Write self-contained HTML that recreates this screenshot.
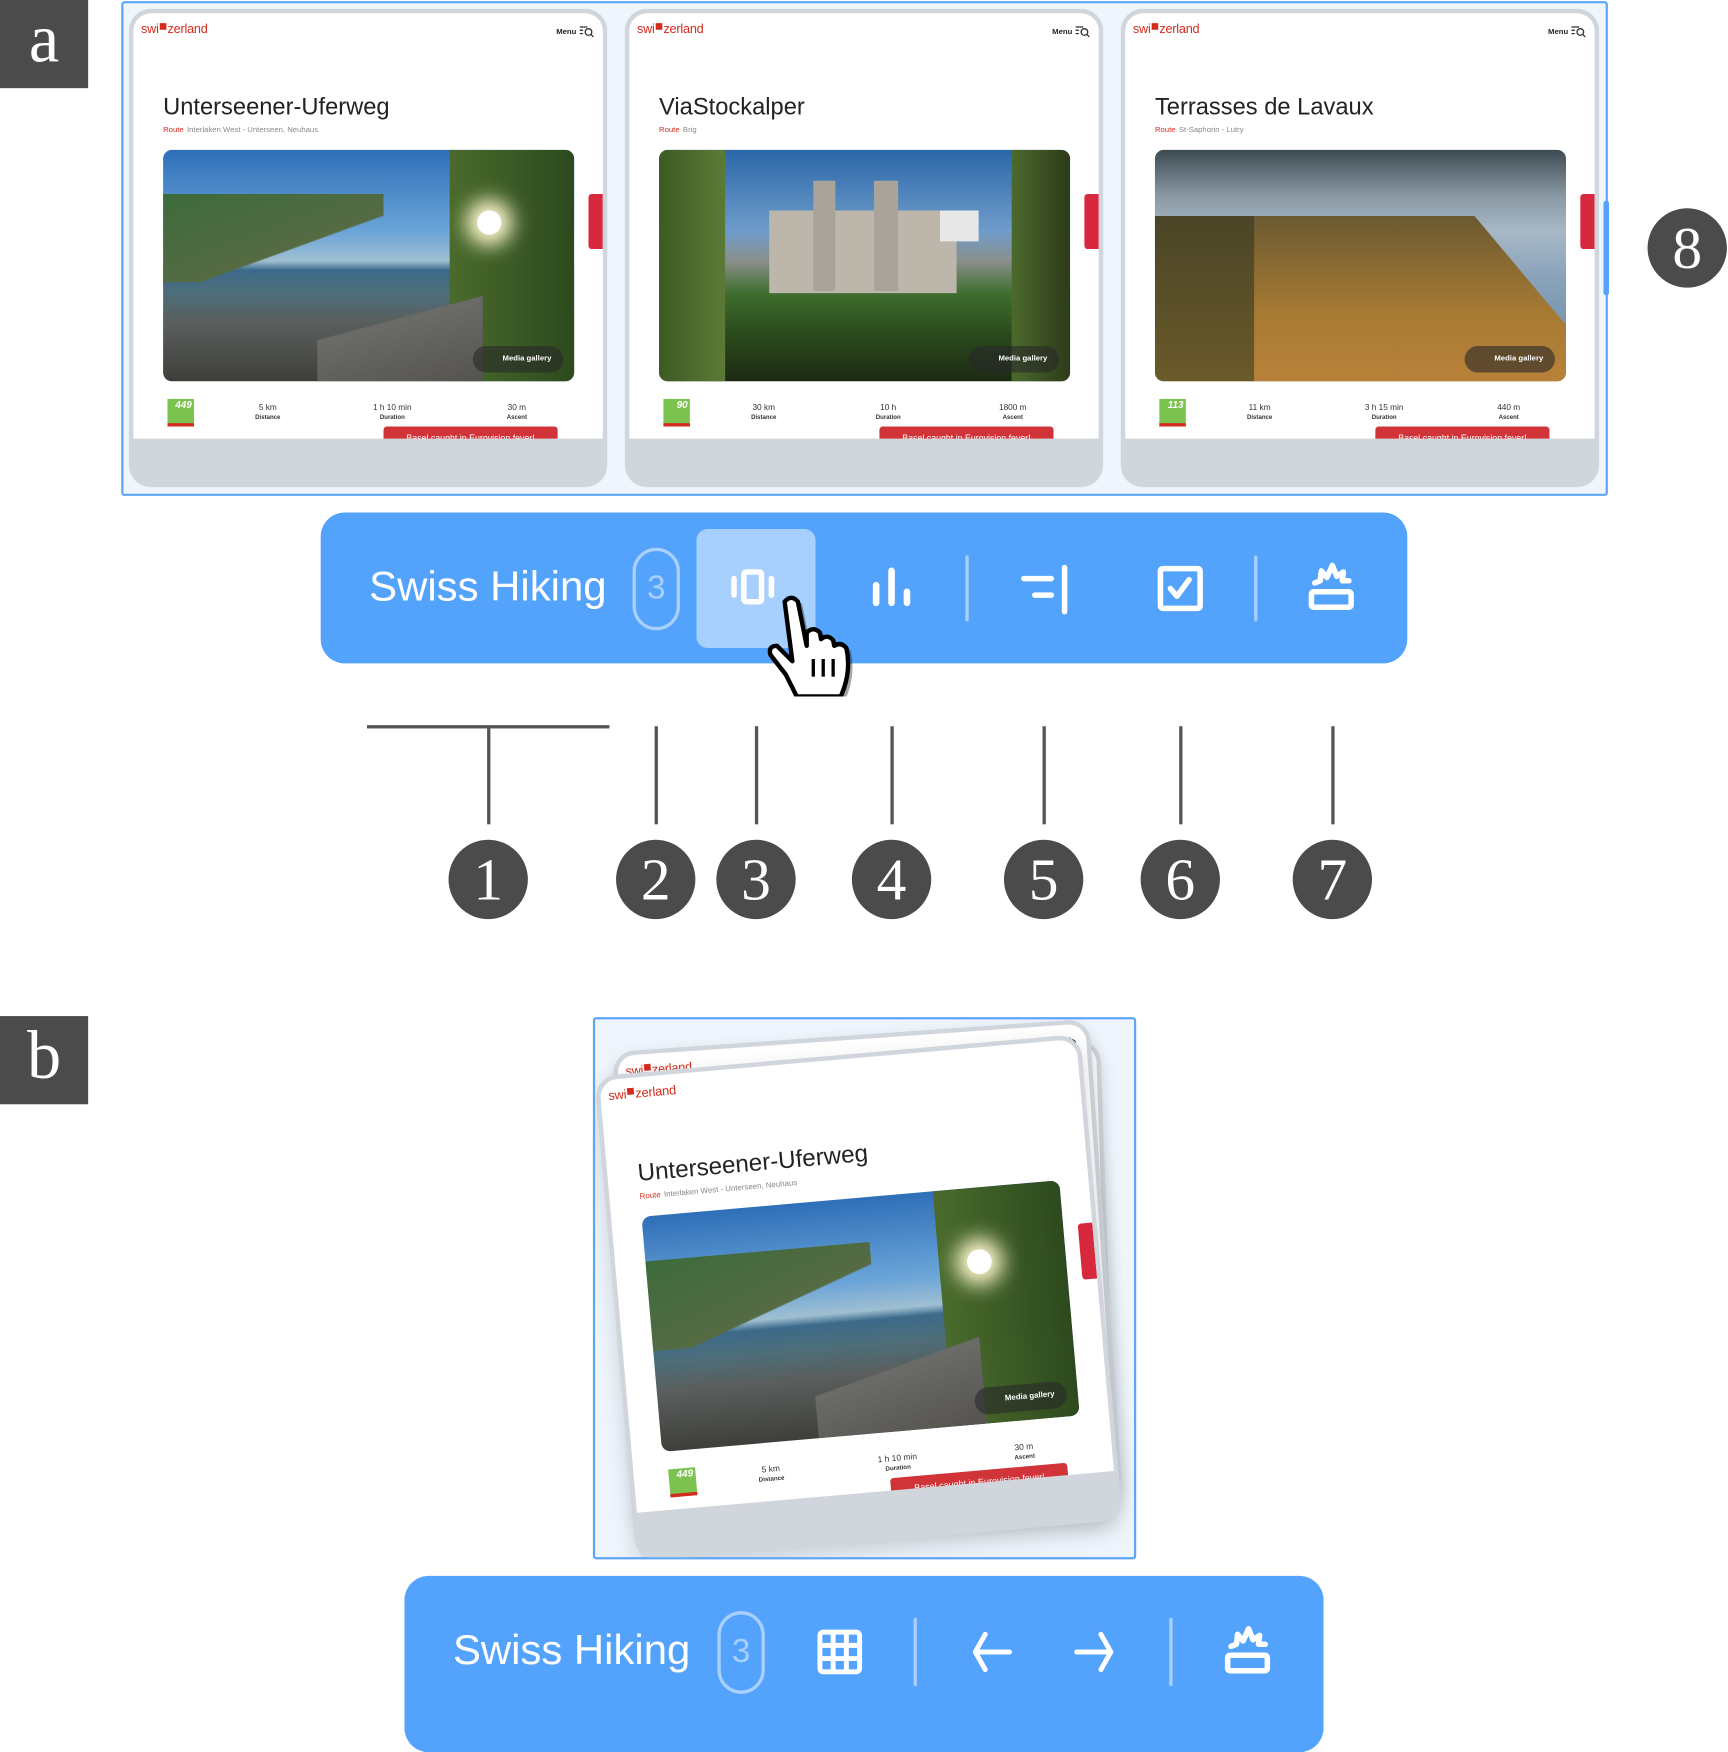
<!DOCTYPE html>
<html><head><meta charset="utf-8"><style>
*{margin:0;padding:0;box-sizing:border-box}
html,body{width:1728px;height:1728px;overflow:hidden;background:#fff;font-family:"Liberation Sans",sans-serif}
#w{position:absolute;left:0;top:0;width:1568px;height:1568px;transform:scale(1.10204);transform-origin:0 0}
.abs{position:absolute}
.lab{position:absolute;width:80px;height:80px;background:#4b4b4b;color:#fff;font-family:"Liberation Serif",serif;font-size:62px;line-height:72px;text-align:center}
.num{position:absolute;width:72px;height:72px;border-radius:50%;background:#4b4b4b;color:#fff;font-family:"Liberation Serif",serif;font-size:54px;line-height:72px;text-align:center}
.vl{position:absolute;width:3px;background:#555;top:659px;height:89px}
.box{position:absolute;border:2px solid #5ea5f6;background:#eef5fd;border-radius:3px}
.card{position:absolute;width:434px;height:434px;background:#d1d5dc;border-radius:20px;overflow:hidden}
.wh{position:absolute;left:4px;top:4px;width:426px;height:386px;background:#fff;border-radius:16px 16px 0 0;overflow:hidden}
.logo{position:absolute;left:7px;top:9px;color:#d52b1e;font-size:11.5px;letter-spacing:-0.2px}
.logo i{display:inline-block;width:6px;height:6px;background:#d52b1e;vertical-align:3px;margin:0 1px}
.menu{position:absolute;right:8px;top:11px;font-size:7px;font-weight:bold;color:#222}
.menu svg{vertical-align:-3px;margin-left:3px}
.tit{position:absolute;left:27px;top:73px;font-size:21.5px;color:#222;white-space:nowrap}
.rt{position:absolute;left:27px;top:103px;font-size:7px;color:#888;white-space:nowrap}
.rt span{color:#d52b1e;margin-right:3px}
.ph{position:absolute;left:27px;top:124px;width:373px;height:210px;border-radius:8px;overflow:hidden}
.mg{position:absolute;right:10px;bottom:8px;width:82px;height:24px;border-radius:12px;background:rgba(40,40,40,.6);color:#fff;font-size:7px;font-weight:bold;line-height:24px;padding-left:27px}
.as{position:absolute;left:413px;top:164px;width:13px;height:50px;background:#d8283d;border-radius:3px 0 0 3px}
.bd{position:absolute;left:31px;top:350px;width:24px;height:25px;background:#7cc24e;color:#fff;font-size:9px;font-weight:bold;font-style:italic;text-align:right;padding-right:2px;border-bottom:3px solid #d52b1e}
.st{position:absolute;top:353px;width:80px;text-align:center;font-size:7.5px;color:#333}
.st small{display:block;font-size:5.5px;font-weight:bold;margin-top:2px}
.rb{position:absolute;left:227px;top:375px;width:158px;height:16px;background:#d13438;border-radius:3px 3px 0 0;color:#fff;font-size:8px;text-align:center;line-height:22px;overflow:hidden}
.tb{position:absolute;background:#53a3fd;border-radius:22px}
.tt{position:absolute;color:#fff;font-size:38px;white-space:nowrap}
.pill{position:absolute;width:43px;height:75px;border:3px solid #a9cffd;border-radius:22px;color:#a9cffd;font-size:30px;text-align:center;line-height:68px}
.sep{position:absolute;width:3px;background:#a9cffd;border-radius:2px}
</style></head><body><div id="w">

<div class="lab" style="left:0;top:0">a</div>
<div class="lab" style="left:0;top:922px">b</div>

<div class="box" style="left:110px;top:1px;width:1349px;height:449px"></div>
<div class="abs" style="left:1455px;top:182px;width:5px;height:86px;background:#53a3fd;border-radius:3px"></div>
<div class="num" style="left:1495px;top:189px">8</div>

<!-- card 1 -->
<div class="card" style="left:117px;top:8px"><div class="wh">
<div class="logo">swi<i></i>zerland</div><div class="menu">Menu<svg width="13" height="11" viewBox="0 0 13 11" fill="none" stroke="#333" stroke-width="1.2"><path d="M0 1.5h7M0 4.5h3M0 7.5h3"/><circle cx="8" cy="6" r="3"/><path d="M10 8l2.5 2.5"/></svg></div>
<div class="tit">Unterseener-Uferweg</div>
<div class="rt"><span>Route</span>Interlaken West - Unterseen, Neuhaus</div>
<div class="ph" style="background:linear-gradient(180deg,#2f6fb8 0%,#6aa4d8 35%,#9fbfd2 48%,#3c6a8a 52%,#4d6e7a 62%,#5a5e5c 75%,#3e3f3a 100%)">
<div class="abs" style="left:0;top:40px;width:200px;height:80px;background:linear-gradient(160deg,#3d6b3a,#556b43 60%,transparent 61%)"></div>
<div class="abs" style="left:260px;top:0;width:113px;height:210px;background:linear-gradient(90deg,#4a6b2c,#2d4a1e)"></div>
<div class="abs" style="left:285px;top:55px;width:22px;height:22px;border-radius:50%;background:#fff;box-shadow:0 0 18px 10px #fff8d0"></div>
<div class="abs" style="left:140px;top:120px;width:150px;height:90px;background:linear-gradient(165deg,transparent 40%,#6b6b68 41%,#55534e)"></div>
<div class="mg">Media gallery</div></div>
<div class="as"></div><div class="bd">449</div>
<div class="st" style="left:82px">5 km<small>Distance</small></div>
<div class="st" style="left:195px">1 h 10 min<small>Duration</small></div>
<div class="st" style="left:308px">30 m<small>Ascent</small></div>
<div class="rb">Basel caught in Eurovision fever!</div>
</div></div>

<!-- card 2 -->
<div class="card" style="left:567px;top:8px"><div class="wh">
<div class="logo">swi<i></i>zerland</div><div class="menu">Menu<svg width="13" height="11" viewBox="0 0 13 11" fill="none" stroke="#333" stroke-width="1.2"><path d="M0 1.5h7M0 4.5h3M0 7.5h3"/><circle cx="8" cy="6" r="3"/><path d="M10 8l2.5 2.5"/></svg></div>
<div class="tit">ViaStockalper</div>
<div class="rt"><span>Route</span>Brig</div>
<div class="ph" style="background:linear-gradient(180deg,#2b67a8 0%,#6e9ccb 35%,#8a8f8a 48%,#3f6e2e 62%,#2a4a1c 80%,#1e2a14 100%)">
<div class="abs" style="left:100px;top:55px;width:170px;height:75px;background:#bdb7ab"></div>
<div class="abs" style="left:140px;top:28px;width:20px;height:100px;background:#a9a49a"></div>
<div class="abs" style="left:195px;top:28px;width:22px;height:100px;background:#a9a49a"></div>
<div class="abs" style="left:255px;top:55px;width:35px;height:28px;background:#e8e8e8"></div>
<div class="abs" style="left:0;top:0;width:60px;height:210px;background:linear-gradient(90deg,#3e5a25,#5c7a36)"></div>
<div class="abs" style="left:320px;top:0;width:53px;height:210px;background:linear-gradient(90deg,#4c6a2c,#2c3b1a)"></div>
<div class="mg">Media gallery</div></div>
<div class="as"></div><div class="bd">90</div>
<div class="st" style="left:82px">30 km<small>Distance</small></div>
<div class="st" style="left:195px">10 h<small>Duration</small></div>
<div class="st" style="left:308px">1800 m<small>Ascent</small></div>
<div class="rb">Basel caught in Eurovision fever!</div>
</div></div>

<!-- card 3 -->
<div class="card" style="left:1017px;top:8px"><div class="wh">
<div class="logo">swi<i></i>zerland</div><div class="menu">Menu<svg width="13" height="11" viewBox="0 0 13 11" fill="none" stroke="#333" stroke-width="1.2"><path d="M0 1.5h7M0 4.5h3M0 7.5h3"/><circle cx="8" cy="6" r="3"/><path d="M10 8l2.5 2.5"/></svg></div>
<div class="tit">Terrasses de Lavaux</div>
<div class="rt"><span>Route</span>St-Saphorin - Lutry</div>
<div class="ph" style="background:linear-gradient(180deg,#3e4a52 0%,#8a99a4 20%,#a7b8c6 35%,#8aa3bb 55%,#7d9ab3 70%,#6b89a4 100%)">
<div class="abs" style="left:-40px;top:60px;width:330px;height:220px;background:linear-gradient(180deg,#6b5a32,#a77a33 40%,#b9823a 70%,#6a4a20);transform:skewX(40deg);transform-origin:0 0"></div>
<div class="abs" style="left:0;top:60px;width:90px;height:150px;background:linear-gradient(180deg,#4a4527,#6a5a2a)"></div>
<div class="mg">Media gallery</div></div>
<div class="as"></div><div class="bd">113</div>
<div class="st" style="left:82px">11 km<small>Distance</small></div>
<div class="st" style="left:195px">3 h 15 min<small>Duration</small></div>
<div class="st" style="left:308px">440 m<small>Ascent</small></div>
<div class="rb">Basel caught in Eurovision fever!</div>
</div></div>

<!-- toolbar a -->
<div class="tb" style="left:291px;top:465px;width:986px;height:137px"></div>
<div class="tt" style="left:335px;top:512px">Swiss Hiking</div>
<div class="pill" style="left:574px;top:497px">3</div>
<div class="abs" style="left:632px;top:480px;width:108px;height:108px;background:#a8d0fe;border-radius:10px"></div>
<svg class="abs" style="left:640px;top:490px" width="92" height="90" viewBox="0 0 92 90" fill="none" stroke="#fff" stroke-width="5" stroke-linecap="round" stroke-linejoin="round">
<rect x="35" y="29" width="16" height="27" rx="2"/><line x1="26" y1="35" x2="26" y2="50"/><line x1="60" y1="35" x2="60" y2="50"/></svg>
<svg class="abs" style="left:780px;top:505px" width="60" height="60" viewBox="0 0 60 60" fill="none" stroke="#fff" stroke-width="6" stroke-linecap="round">
<line x1="15" y1="26" x2="15" y2="42"/><line x1="29" y1="13" x2="29" y2="42"/><line x1="43" y1="32" x2="43" y2="42"/></svg>
<div class="sep" style="left:876px;top:504px;height:60px"></div>
<svg class="abs" style="left:917px;top:505px" width="60" height="60" viewBox="0 0 60 60" fill="none" stroke="#fff" stroke-width="5" stroke-linecap="round">
<line x1="12" y1="20" x2="37" y2="20"/><line x1="22" y1="35" x2="37" y2="35"/><line x1="49" y1="10" x2="49" y2="50"/></svg>
<svg class="abs" style="left:1041px;top:505px" width="60" height="60" viewBox="0 0 60 60" fill="none" stroke="#fff" stroke-width="5" stroke-linecap="round" stroke-linejoin="round">
<rect x="12" y="11" width="36" height="36" rx="2"/><polyline points="21,29 27,36 38,21"/></svg>
<div class="sep" style="left:1138px;top:504px;height:60px"></div>
<svg class="abs" style="left:1178px;top:505px" width="60" height="60" viewBox="0 0 60 60" fill="none" stroke="#fff" stroke-width="5" stroke-linecap="round" stroke-linejoin="round">
<rect x="12" y="32" width="36" height="14" rx="2"/><polyline points="15,24 20,22 21,13 26,19 31,8 35,18 41,14 40,22 46,22"/></svg>
<!-- cursor -->
<svg class="abs" style="left:694px;top:536px" width="92" height="96" viewBox="0 0 92 96">
<path d="M18 10 q6-7 12 0 l8 40 l0-12 q6-6 12 0 l1 6 q6-5 11 1 l1 5 q6-4 11 2 q4 18 -2 36 l-3 8 l-40 0 l-10-20 l-14-18 q-2-8 6-8 l14 14 z" fill="#fff" stroke="#000" stroke-width="4" stroke-linejoin="round" transform="translate(2,3)" opacity=".35"/>
<path d="M18 10 q6-7 12 0 l8 40 l0-12 q6-6 12 0 l1 6 q6-5 11 1 l1 5 q6-4 11 2 q4 18 -2 36 l-3 8 l-40 0 l-10-20 l-14-18 q-2-8 6-8 l14 14 z" fill="#fff" stroke="#000" stroke-width="4" stroke-linejoin="round"/>
<path d="M44 62 v16 M53 62 v16 M62 62 v16" stroke="#000" stroke-width="3"/></svg>

<!-- callouts -->
<div class="abs" style="left:333px;top:658px;width:220px;height:3px;background:#555"></div>
<div class="vl" style="left:442px"></div><div class="vl" style="left:594px"></div><div class="vl" style="left:685px"></div>
<div class="vl" style="left:808px"></div><div class="vl" style="left:946px"></div><div class="vl" style="left:1070px"></div><div class="vl" style="left:1208px"></div>
<div class="num" style="left:407px;top:762px">1</div><div class="num" style="left:559px;top:762px">2</div><div class="num" style="left:650px;top:762px">3</div>
<div class="num" style="left:773px;top:762px">4</div><div class="num" style="left:911px;top:762px">5</div><div class="num" style="left:1035px;top:762px">6</div><div class="num" style="left:1173px;top:762px">7</div>

<!-- section b -->
<div class="box" style="left:538px;top:923px;width:493px;height:492px;overflow:hidden">
<div class="card" style="left:32px;top:26px;transform:rotate(-2deg);box-shadow:0 6px 16px rgba(0,0,0,.12)"><div class="wh"></div></div>
<div class="card" style="left:30px;top:14px;transform:rotate(-4deg);box-shadow:0 6px 16px rgba(0,0,0,.12)"><div class="wh"><div class="logo">swi<i></i>zerland</div><div class="menu">Menu<svg width="13" height="11" viewBox="0 0 13 11" fill="none" stroke="#333" stroke-width="1.2"><path d="M0 1.5h7M0 4.5h3M0 7.5h3"/><circle cx="8" cy="6" r="3"/><path d="M10 8l2.5 2.5"/></svg></div></div></div>
<div class="card" style="left:22px;top:36px;transform:rotate(-5deg) scale(1.02);box-shadow:0 8px 20px rgba(0,0,0,.15)"><div class="wh">
<div class="logo">swi<i></i>zerland</div>
<div class="tit">Unterseener-Uferweg</div>
<div class="rt"><span>Route</span>Interlaken West - Unterseen, Neuhaus</div>
<div class="ph" style="background:linear-gradient(180deg,#2f6fb8 0%,#6aa4d8 35%,#9fbfd2 48%,#3c6a8a 52%,#4d6e7a 62%,#5a5e5c 75%,#3e3f3a 100%)">
<div class="abs" style="left:0;top:40px;width:200px;height:80px;background:linear-gradient(160deg,#3d6b3a,#556b43 60%,transparent 61%)"></div>
<div class="abs" style="left:260px;top:0;width:113px;height:210px;background:linear-gradient(90deg,#4a6b2c,#2d4a1e)"></div>
<div class="abs" style="left:285px;top:55px;width:22px;height:22px;border-radius:50%;background:#fff;box-shadow:0 0 18px 10px #fff8d0"></div>
<div class="abs" style="left:140px;top:120px;width:150px;height:90px;background:linear-gradient(165deg,transparent 40%,#6b6b68 41%,#55534e)"></div>
<div class="mg">Media gallery</div></div>
<div class="as"></div><div class="bd">449</div>
<div class="st" style="left:82px">5 km<small>Distance</small></div>
<div class="st" style="left:195px">1 h 10 min<small>Duration</small></div>
<div class="st" style="left:308px">30 m<small>Ascent</small></div>
<div class="rb">Basel caught in Eurovision fever!</div>
</div></div>
</div>

<!-- toolbar b -->
<div class="tb" style="left:367px;top:1430px;width:834px;height:160px"></div>
<div class="tt" style="left:411px;top:1477px">Swiss Hiking</div>
<div class="pill" style="left:651px;top:1462px">3</div>
<svg class="abs" style="left:732px;top:1470px" width="60" height="60" viewBox="0 0 60 60" fill="none" stroke="#fff" stroke-width="4.5">
<rect x="12" y="11" width="36" height="36" rx="3"/><line x1="24" y1="11" x2="24" y2="47"/><line x1="36" y1="11" x2="36" y2="47"/><line x1="12" y1="23" x2="48" y2="23"/><line x1="12" y1="35" x2="48" y2="35"/></svg>
<div class="sep" style="left:829px;top:1468px;height:62px"></div>
<svg class="abs" style="left:870px;top:1470px" width="60" height="60" viewBox="0 0 60 60" fill="none" stroke="#fff" stroke-width="4.5" stroke-linecap="round" stroke-linejoin="round">
<polyline points="24,13 15,29 24,45"/><line x1="16" y1="29" x2="46" y2="29"/></svg>
<svg class="abs" style="left:963px;top:1470px" width="60" height="60" viewBox="0 0 60 60" fill="none" stroke="#fff" stroke-width="4.5" stroke-linecap="round" stroke-linejoin="round">
<polyline points="36,13 45,29 36,45"/><line x1="14" y1="29" x2="44" y2="29"/></svg>
<div class="sep" style="left:1061px;top:1468px;height:62px"></div>
<svg class="abs" style="left:1102px;top:1470px" width="60" height="60" viewBox="0 0 60 60" fill="none" stroke="#fff" stroke-width="5" stroke-linecap="round" stroke-linejoin="round">
<rect x="12" y="32" width="36" height="14" rx="2"/><polyline points="15,24 20,22 21,13 26,19 31,8 35,18 41,14 40,22 46,22"/></svg>

</div></body></html>
